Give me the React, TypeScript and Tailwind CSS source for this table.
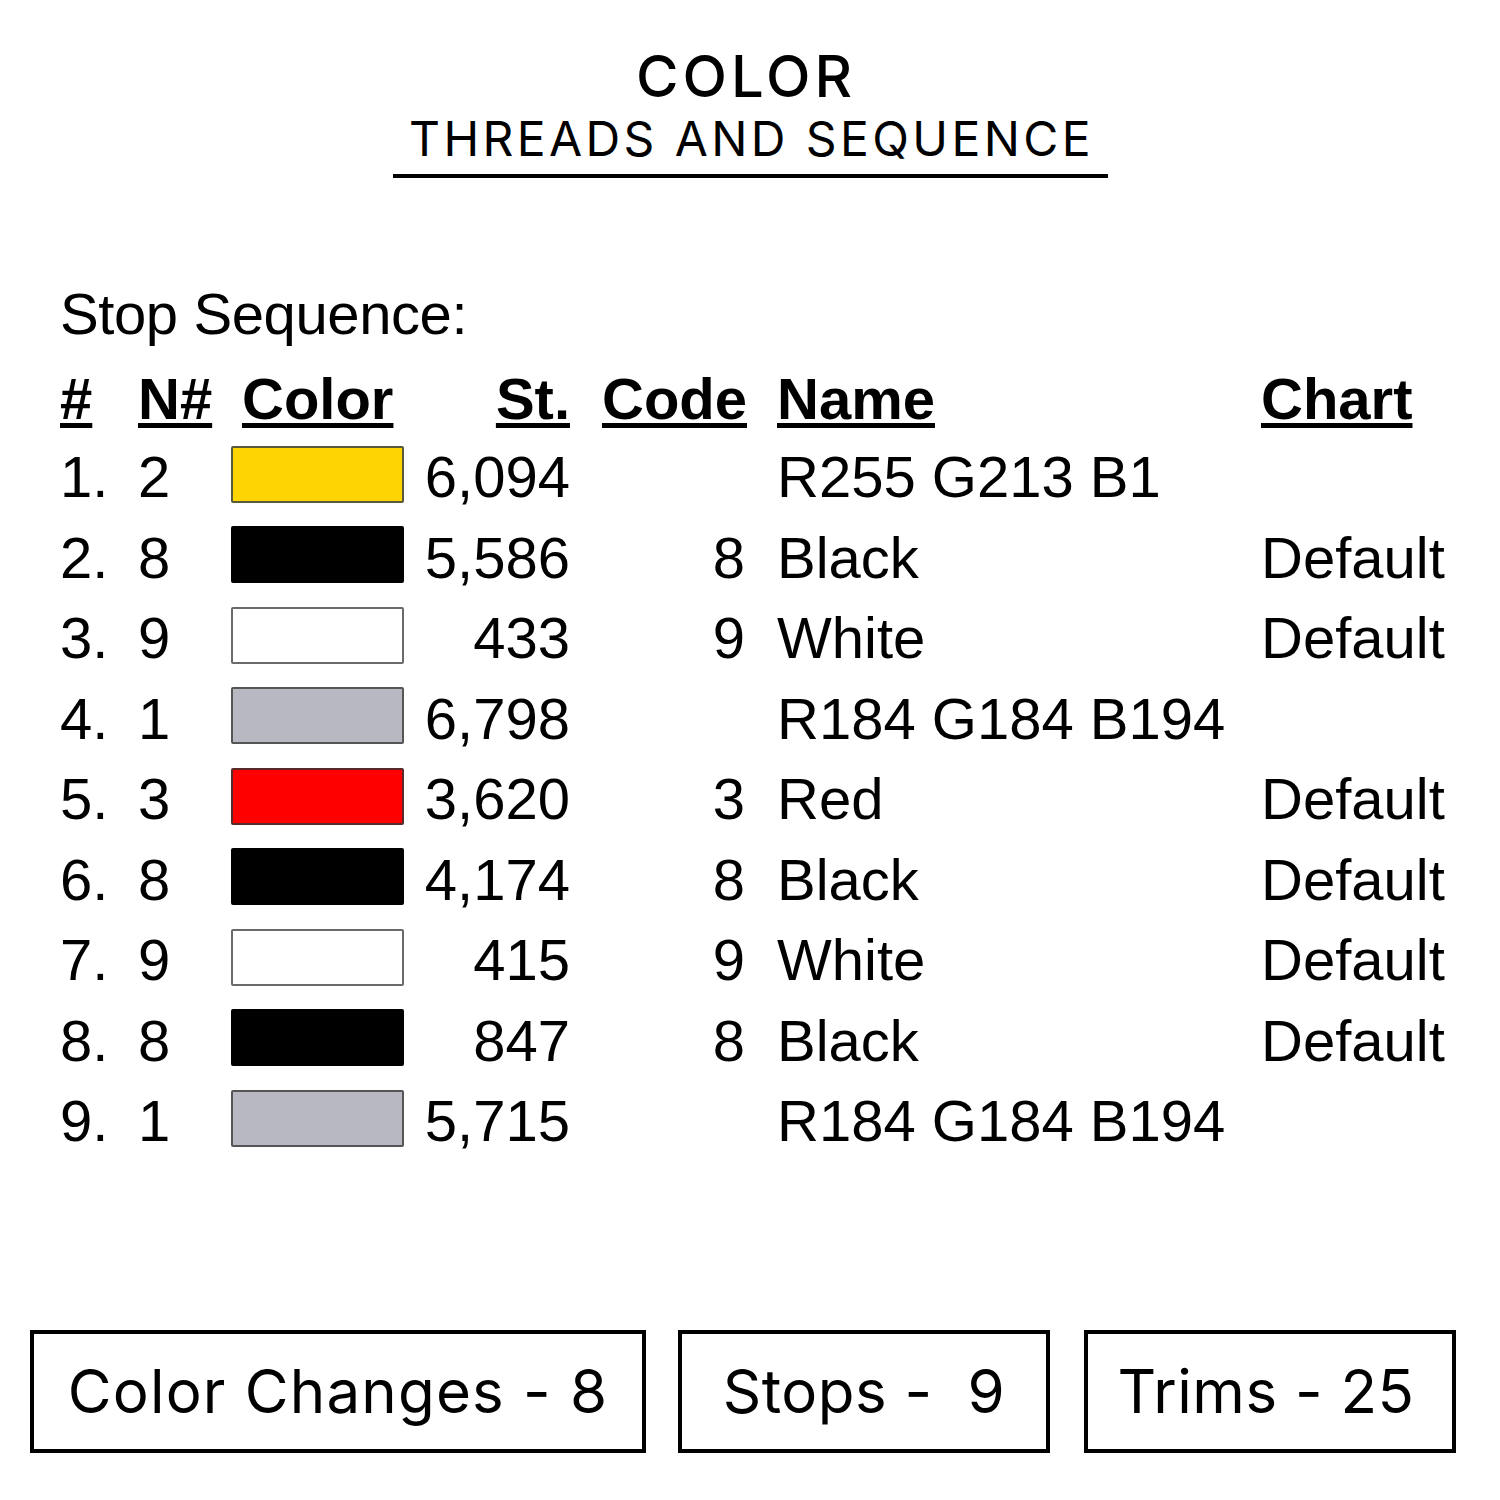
import React from "react";

type Row = {
  n: string;
  nn: string;
  color: string;
  border: string;
  st: string;
  code: string;
  name: string;
  chart: string;
};

const rows: Row[] = [
  { n: "1.", nn: "2", color: "bg-[#ffd501]", border: "border-[#5a5a3a]", st: "6,094", code: "", name: "R255 G213 B1", chart: "" },
  { n: "2.", nn: "8", color: "bg-black", border: "border-black", st: "5,586", code: "8", name: "Black", chart: "Default" },
  { n: "3.", nn: "9", color: "bg-white", border: "border-[#6a6a6a]", st: "433", code: "9", name: "White", chart: "Default" },
  { n: "4.", nn: "1", color: "bg-[#b8b8c2]", border: "border-[#555555]", st: "6,798", code: "", name: "R184 G184 B194", chart: "" },
  { n: "5.", nn: "3", color: "bg-[#ff0000]", border: "border-[#5a2a2a]", st: "3,620", code: "3", name: "Red", chart: "Default" },
  { n: "6.", nn: "8", color: "bg-black", border: "border-black", st: "4,174", code: "8", name: "Black", chart: "Default" },
  { n: "7.", nn: "9", color: "bg-white", border: "border-[#6a6a6a]", st: "415", code: "9", name: "White", chart: "Default" },
  { n: "8.", nn: "8", color: "bg-black", border: "border-black", st: "847", code: "8", name: "Black", chart: "Default" },
  { n: "9.", nn: "1", color: "bg-[#b8b8c2]", border: "border-[#555555]", st: "5,715", code: "", name: "R184 G184 B194", chart: "" },
];

const arial = "font-['Liberation_Sans',Arial,sans-serif]";
const geo = "font-['Inter','Lato',sans-serif]";
const ul = "underline decoration-[5px] underline-offset-[4px]";

export default function App() {
  return (
    <div className="w-[1500px] h-[1500px] bg-white text-black flex flex-col">
      {/* Title */}
      <div className={`${geo} flex flex-col items-center`}>
        <div className="mt-[47px] pr-[8px] text-[58px] leading-[58px] font-medium tracking-[4px]">COLOR</div>
        <div className="mt-[10px] pl-[3px] text-[48px] leading-[48px] font-normal tracking-[3.4px]">THREADS AND SEQUENCE</div>
        <div className="mt-[11px] ml-[1px] w-[715px] h-[4px] bg-black" />
      </div>

      {/* Table */}
      <div className={`${arial} pl-[60px]`}>
        <div className="mt-[107px] text-[58px] leading-[58px] tracking-[-0.4px]">Stop Sequence:</div>

        <div className="mt-[25px] flex h-[62px] text-[58px] leading-[62px] font-bold">
          <div className="w-[78px]"><span className={ul}>#</span></div>
          <div className="w-[93px]"><span className={ul}>N#</span></div>
          <div className="w-[173px] pl-[11px]"><span className={ul}>Color</span></div>
          <div className="w-[166px] text-right"><span className={ul}>St.</span></div>
          <div className="w-[177px] text-right"><span className={ul}>Code</span></div>
          <div className="w-[30px]" />
          <div className="w-[484px]"><span className={ul}>Name</span></div>
          <div><span className={ul}>Chart</span></div>
        </div>

        <div className="mt-[7px] flex flex-col">
          {rows.map((r, i) => (
            <div key={i} className="flex items-center h-[80.5px] text-[58px] leading-[80.5px]">
              <div className="w-[78px]">{r.n}</div>
              <div className="w-[93px]">{r.nn}</div>
              <div className="w-[173px] flex items-center">
                <div className={`mb-[6px] w-[174px] h-[57px] border-2 rounded-[2px] ${r.color} ${r.border}`} />
              </div>
              <div className="w-[166px] text-right">{r.st}</div>
              <div className="w-[177px] text-right pr-[2px]">{r.code}</div>
              <div className="w-[30px]" />
              <div className="w-[484px]">{r.name}</div>
              <div>{r.chart}</div>
            </div>
          ))}
        </div>
      </div>

      {/* Summary boxes */}
      <div className={`${geo} mt-[168px] pl-[30px] flex items-center gap-[32px] text-[60px] font-normal`}>
        <div className="w-[616px] h-[123px] border-[4px] border-black flex items-center justify-center">
          <span className="tracking-[1.2px]">Color Changes - 8</span>
        </div>
        <div className="w-[372px] h-[123px] border-[4px] border-black flex items-center justify-center">
          <span className="whitespace-pre tracking-[0.5px]">Stops -  9</span>
        </div>
        <div className="ml-[2px] w-[372px] h-[123px] border-[4px] border-black flex items-center justify-center">
          <span className="pr-[8px] tracking-[0.5px]">Trims - 25</span>
        </div>
      </div>
    </div>
  );
}
